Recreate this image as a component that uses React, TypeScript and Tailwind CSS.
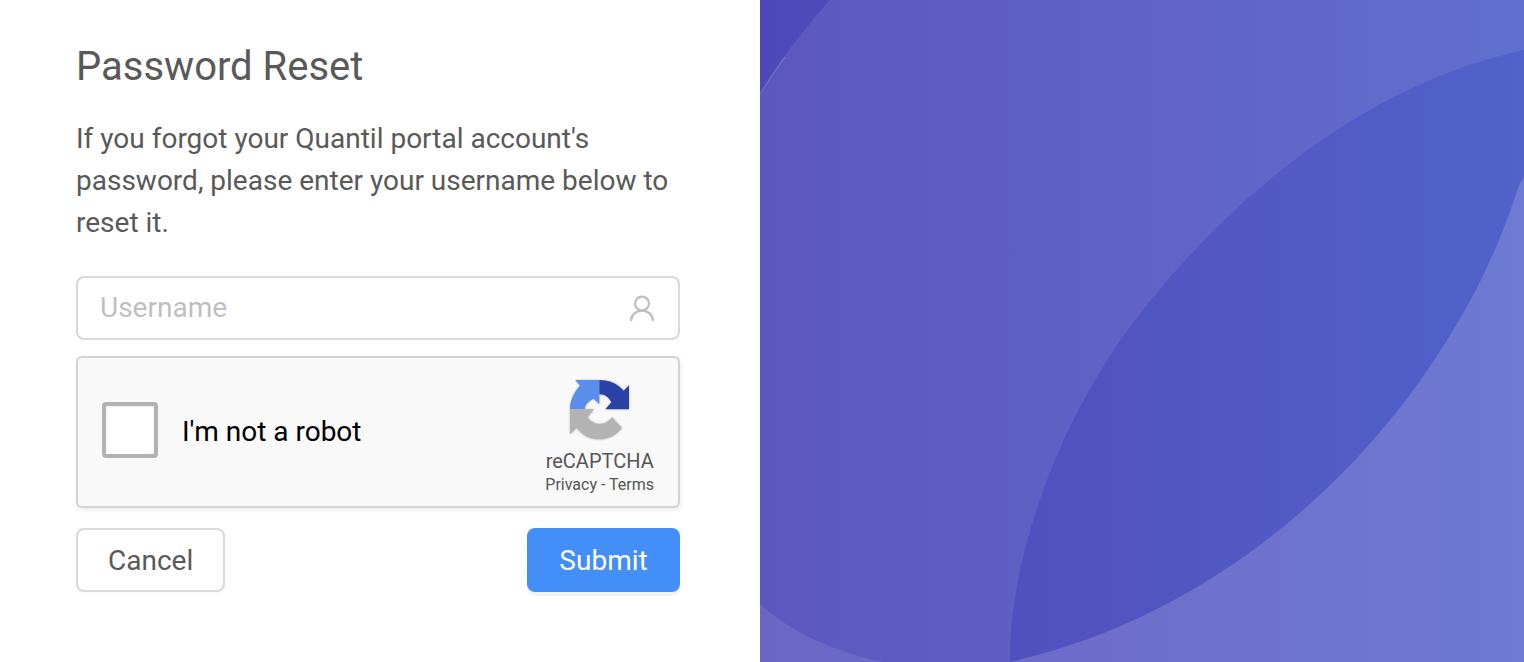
import React from "react";

function UserIcon() {
  return (
    <svg viewBox="0 0 26 28" className="h-7 w-[26px]" fill="none" stroke="#bfbfbf" strokeWidth="2.3" aria-hidden="true">
      <circle cx="13" cy="9.5" r="6.9" />
      <path d="M2 27C2 21.2 6.8 16.6 13 16.6S24 21.2 24 27" />
    </svg>
  );
}

function RecaptchaLogo() {
  return (
    <svg viewBox="119 89 183 186" className="h-[62px] w-[61px] drop-shadow-[0_0_1px_rgba(0,0,0,0.25)]" aria-hidden="true">
      <path fill="#5a8eea" d="M138 92H210V165L193 148C178 155 167 166 166 180H122C122 154 133 129 152 109Z" />
      <path fill="#2a41a6" d="M210 92C240 92 266 104 283 124L299 108V180H228L246 159C239 144 227 135 210 135Z" />
      <path fill="#b3b3b3" d="M122 180H194L175 204C182 216 196 224 210 224C227 224 240 216 248 204L278 236C262 258 236 270 210 270C182 270 158 258 142 236L122 255Z" />
    </svg>
  );
}

function Backdrop() {
  return (
    <svg viewBox="0 0 764 662" preserveAspectRatio="none" className="h-full w-full" aria-hidden="true">
      <defs>
        <linearGradient id="base" x1="0" x2="1" y1="0" y2="0">
          <stop offset="0" stopColor="#4d48b9" />
          <stop offset="0.48" stopColor="#5154c1" />
          <stop offset="1" stopColor="#5162ca" />
        </linearGradient>
      </defs>
      <rect width="764" height="662" fill="url(#base)" />
      <path
        fill="#fff"
        fillOpacity="0.085"
        d="M70 0Q56 15 43 32Q20 60 0 94V604C30 632 76 652 123 662H250V645C256 535 304 420 366 332C460 206 598 86 764 50V0Z"
      />
      <path fill="#fff" fillOpacity="0.09" d="M0 604C30 632 76 652 123 662H0Z" />
      <path fill="#fff" fillOpacity="0.085" d="M0 604C30 632 76 652 123 662H0Z" />
      <path
        fill="#fff"
        fillOpacity="0.16"
        d="M764 177Q760 182 758 188C744 232 722 284 692 332C602 482 446 618 250 662H764Z"
      />
      <path fill="none" stroke="#fff" strokeOpacity="0.12" strokeWidth="1.5" d="M0 94Q12 74 25 57" />
    </svg>
  );
}

export default function App() {
  return (
    <div className="flex min-h-screen bg-white font-[Roboto,sans-serif] text-[28px] text-[#595959]">
      <main className="w-full px-[76px] pt-[37px] pb-[70px] lg:w-[760px] lg:shrink-0 lg:pr-20">
        <h1 className="text-[40px] leading-[60px]">Password Reset</h1>
        <p className="mt-[21px] leading-[42px]">
          If you forgot your Quantil portal account's password, please enter your username below to reset it.
        </p>
        <form className="mt-8" onSubmit={(e) => e.preventDefault()}>
          <div className="flex h-16 items-center rounded-lg border-2 border-[#d9d9d9] bg-white pr-[23px] pl-[22px]">
            <input
              type="text"
              aria-label="Username"
              placeholder="Username"
              className="h-full min-w-0 flex-1 pb-0.5 outline-none placeholder:text-[#bfbfbf]"
            />
            <UserIcon />
          </div>
          <div className="mt-4 flex h-[152px] justify-between rounded-md border-2 border-[#d3d3d3] bg-[#f9f9f9] px-6 shadow-[1px_2px_4px_1px_rgba(0,0,0,0.06)]">
            <label className="flex items-center gap-6 pb-1 text-black">
              <input
                type="checkbox"
                className="size-14 appearance-none rounded border-4 border-[#b2b2b2] bg-white shadow-[inset_0_1px_3px_rgba(0,0,0,0.08)]"
              />
              <span className="pt-1">I'm not a robot</span>
            </label>
            <div className="flex flex-col items-center pt-[21px] text-[#555]">
              <RecaptchaLogo />
              <span className="mt-2 text-[20px] leading-6">reCAPTCHA</span>
              <span className="text-[16px] leading-6">
                <a href="#privacy">Privacy</a> - <a href="#terms">Terms</a>
              </span>
            </div>
          </div>
          <div className="mt-5 flex justify-between">
            <button
              type="button"
              className="h-16 rounded-lg border-2 border-[#d9d9d9] bg-white px-[30px] pt-0.5 shadow-[0_4px_0_rgba(0,0,0,0.015)]"
            >
              Cancel
            </button>
            <button
              type="submit"
              className="h-16 min-w-[153px] rounded-lg bg-[#448ef7] px-8 pt-0.5 text-white shadow-[0_4px_0_rgba(0,0,0,0.045)]"
            >
              Submit
            </button>
          </div>
        </form>
      </main>
      <aside className="relative hidden flex-1 lg:block">
        <div className="absolute inset-0">
          <Backdrop />
        </div>
      </aside>
    </div>
  );
}
